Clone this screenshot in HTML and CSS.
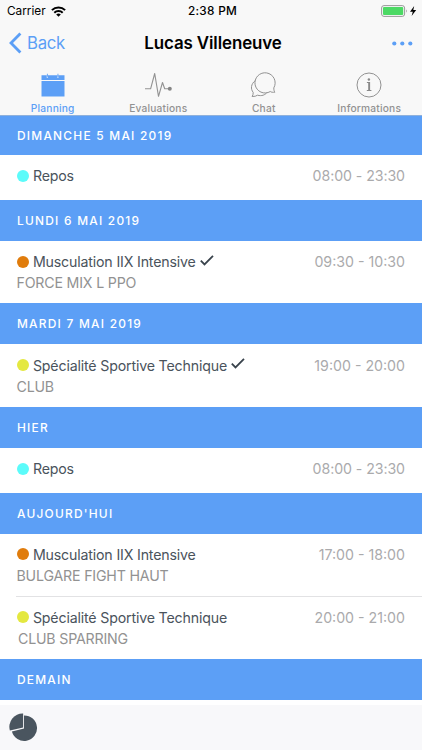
FILE: index.html
```html
<!DOCTYPE html>
<html lang="fr">
<head>
<meta charset="utf-8">
<meta name="viewport" content="width=device-width, initial-scale=1">
<title>Planning</title>
<link rel="stylesheet" href="styles.css">
</head>
<body>
<div class="app">
  <header class="top">
    <div class="status">
      <div class="status-left"><span class="carrier">Carrier</span>
        <svg class="wifi" width="15" height="11" viewBox="0 0 15 11"><g fill="none" stroke="#000" stroke-width="2"><path d="M.9 4.1a9.4 9.4 0 0 1 13.2 0"/><path d="M3.3 6.7a6 6 0 0 1 8.4 0"/></g><path d="M7.5 10.8 5.2 8.5a3.3 3.3 0 0 1 4.6 0z"/></svg>
      </div>
      <span class="clock">2:38 PM</span>
      <svg class="battery" width="37" height="13" viewBox="0 0 37 13"><rect x=".6" y=".6" width="23" height="10.8" rx="2.4" fill="none" stroke="#999" stroke-width="1"/><rect x="2" y="2" width="20.2" height="8" rx="1" fill="#4cd964"/><path d="M25 4.2q1.8 1.8 0 3.6z" fill="#999"/><path d="M33.2 1 29 6.8h2.8L30.6 11l4.6-6h-2.9z"/></svg>
    </div>
    <nav class="navbar">
      <div class="back"><svg width="13" height="22" viewBox="0 0 13 22"><path d="M11.4 1.4 2 11l9.4 9.6" fill="none" stroke="#5c9ff6" stroke-width="2.8"/></svg><span>Back</span></div>
      <h1 class="title">Lucas Villeneuve</h1>
      <svg class="more" width="21" height="5" viewBox="0 0 21 5" fill="#5c9ff6"><circle cx="2.3" cy="2.5" r="2.1"/><circle cx="10.3" cy="2.5" r="2.1"/><circle cx="18.3" cy="2.5" r="2.1"/></svg>
    </nav>
    <div class="tabs">
      <div class="tab active">
        <svg width="28" height="28" viewBox="0 0 28 28" fill="#5c9ff6"><path d="M2.5 4.2h5.2v2.2q.6.9 1.2 0V4.2h9.4v2.2q.6.9 1.2 0V4.2h6V9h-23zM2.5 10h23v15.5h-23zM7.9 2.7h.9v3h-.9zM18.5 2.7h.9v3h-.9z"/></svg>
        <span>Planning</span>
      </div>
      <div class="tab">
        <svg width="28" height="28" viewBox="0 0 28 28"><path d="M1 17.8h5.6L10.7 2.5l3.8 22.8 4-13.8 2.2 6.3h4" fill="none" stroke="#929292" stroke-width="1.1" stroke-linejoin="round"/><circle cx="25.8" cy="17.8" r="2" fill="#858585"/></svg>
        <span class="evaluations">Evaluations</span>
      </div>
      <div class="tab">
        <svg width="28" height="28" viewBox="0 0 28 28" fill="none" stroke="#929292" stroke-width="1"><path d="M5.3 9.6C.9 12.9.4 18 3.2 21.4q.1 2.4-1.1 4.1 3.6.1 5.4-1.3c4.2 1.2 7.6-.3 9.4-2.6"/><path d="M20.3 20.5A10.1 10.1 0 1 1 23.8 16.9c0 1.8.2 3.1 1.1 4.3-2.1.2-3.7.1-4.6-.7z"/></svg>
        <span>Chat</span>
      </div>
      <div class="tab">
        <svg width="28" height="28" viewBox="0 0 28 28"><circle cx="14" cy="14" r="12" fill="none" stroke="#929292"/><path d="M11.9 11h3.2v8h1.3v1h-4.6v-1h1.4v-7h-1.3z" fill="#888"/><circle cx="13.9" cy="8.5" r="1.2" fill="#888"/></svg>
        <span class="informations">Informations</span>
      </div>
    </div>
  </header>

  <main class="agenda">
    <h2 class="day first">DIMANCHE 5 MAI 2019</h2>
    <div class="event short"><div class="line"><i class="dot cyan"></i><span class="name">Repos</span><time class="night">08:00 - 23:30</time></div></div>

    <h2 class="day">LUNDI 6 MAI 2019</h2>
    <div class="event"><div class="line"><i class="dot orange"></i><span class="name">Musculation IIX Intensive</span><svg class="check" width="14" height="11" viewBox="0 0 14 11"><path d="m.8 5.6 3.7 3.8L13 .8" fill="none" stroke="#39434c" stroke-width="1.8"/></svg><time>09:30 - 10:30</time></div><div class="place">FORCE MIX L PPO</div></div>

    <h2 class="day">MARDI 7 MAI 2019</h2>
    <div class="event"><div class="line"><i class="dot yellow"></i><span class="name">Spécialité Sportive Technique</span><svg class="check" width="14" height="11" viewBox="0 0 14 11"><path d="m.8 5.6 3.7 3.8L13 .8" fill="none" stroke="#39434c" stroke-width="1.8"/></svg><time>19:00 - 20:00</time></div><div class="place">CLUB</div></div>

    <h2 class="day">HIER</h2>
    <div class="event short"><div class="line"><i class="dot cyan"></i><span class="name">Repos</span><time class="night">08:00 - 23:30</time></div></div>

    <h2 class="day">AUJOURD'HUI</h2>
    <div class="event"><div class="line"><i class="dot orange"></i><span class="name">Musculation IIX Intensive</span><time>17:00 - 18:00</time></div><div class="place">BULGARE FIGHT HAUT</div></div>
    <div class="event divided"><div class="line"><i class="dot yellow"></i><span class="name">Spécialité Sportive Technique</span><time>20:00 - 21:00</time></div><div class="place inset">CLUB SPARRING</div></div>

    <h2 class="day">DEMAIN</h2>
  </main>

  <footer class="toolbar">
    <svg width="30" height="30" viewBox="0 0 30 30" fill="#4a555f"><path d="M16 2.4A12.8 12.8 0 1 1 3.9 18.6L16 15.5z"/><path d="M15.1.6v13.9L1.9 17.6A13.2 13.2 0 0 1 15.1.6z"/></svg>
  </footer>
</div>
</body>
</html>
```
FILE: styles.css
```css
* { box-sizing: border-box; }
body { margin: 0; background: #fff; font-family: Inter, "Liberation Sans", sans-serif; }
svg { display: block; flex: none; }
.app { width: 422px; height: 750px; display: flex; flex-direction: column; overflow: hidden; }

.top { height: 116px; flex: none; background: #f8f8f8; border-bottom: 1px solid #8fb1dc; }
.status { height: 22px; display: grid; grid-template-columns: 1fr auto 1fr; align-items: center; padding: 0 4px 0 7px; font-size: 11.8px; }
.status-left { display: flex; align-items: center; gap: 5px; }
.carrier { letter-spacing: 0; }
.clock { font-weight: 500; letter-spacing: .3px; }
.battery { justify-self: end; }
.navbar { height: 42px; display: grid; grid-template-columns: 1fr auto 1fr; align-items: center; padding: 0 9px 0 9px; }
.back { display: flex; align-items: center; gap: 5px; color: #5c9ff6; font-size: 16.8px; letter-spacing: -.3px; }
.title { margin: 0 -4px 0 0; font-size: 16.9px; font-weight: 560; letter-spacing: -.1px; }
.more { justify-self: end; }
.tabs { display: grid; grid-template-columns: repeat(4, 1fr); padding-top: 7px; }
.tab { display: flex; flex-direction: column; align-items: center; color: #929292; font-size: 10.2px; line-height: 14px; font-weight: 500; letter-spacing: .2px; gap: 2px; }
.tab.active { color: #5c9ff6; }

.agenda { flex: 1; min-height: 0; }
.day { margin: 0; height: 41px; background: #5c9ff6; color: #fff; padding-left: 17px; font-size: 11.9px; line-height: 41.6px; font-weight: 450; letter-spacing: 1.25px; }
.day.first { height: 39.2px; line-height: 39.4px; }
.event { height: 62.6px; padding: 10.2px 17px 0 16.5px; }
.event.short { height: 44.7px; }
.divided { background: linear-gradient(#e2e2e4, #e2e2e4) 16px 0 / 100% 1px no-repeat; }
.line { height: 21px; display: flex; align-items: center; font-size: 14.2px; }
.dot { width: 12px; height: 12px; border-radius: 50%; margin-right: 4.4px; flex: none; }
.cyan { background: #5cfbfa; }
.orange { background: #e07c0c; }
.yellow { background: #e4e840; }
.name { color: #4a535c; letter-spacing: -.17px; white-space: nowrap; }
.check { margin: -3px 0 0 4px; }
time { margin-left: auto; color: #aaaaac; }
.night { letter-spacing: -.08px; }
.place { color: #929292; font-size: 14.2px; line-height: 22px; letter-spacing: -.19px; }
.inset { padding-left: 1.5px; }

.toolbar { height: 45px; flex: none; background: #f8f8fa; padding: 8px 0 0 8px; }
```
